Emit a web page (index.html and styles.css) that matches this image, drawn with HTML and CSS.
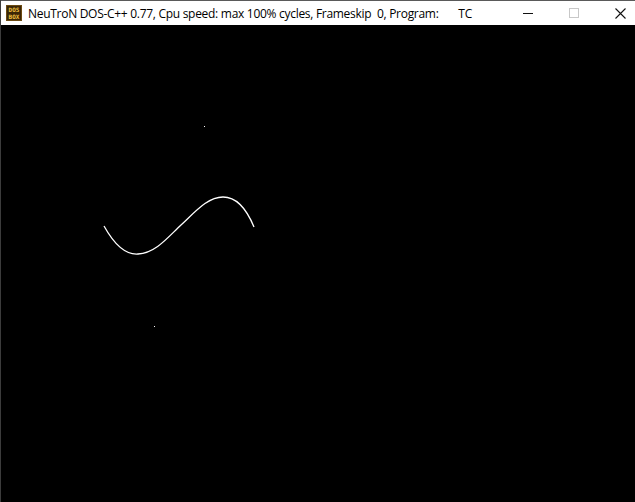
FILE: index.html
```html
<!DOCTYPE html>
<html>
<head>
<meta charset="utf-8">
<link rel="stylesheet" href="styles.css">
</head>
<body>
<div class="window">
  <header class="titlebar">
    <svg class="appicon" width="16" height="16" viewBox="0 0 16 16">
      <rect x="0" y="0" width="16" height="16" fill="#6b4a12"/>
      <rect x="1" y="1" width="14" height="14" fill="#3a2606"/>
      <text x="8" y="7" font-family="DejaVu Sans Mono, monospace" font-size="6" font-weight="bold" fill="#f0c040" text-anchor="middle">DOS</text>
      <text x="8" y="14" font-family="DejaVu Sans Mono, monospace" font-size="6" font-weight="bold" fill="#f0c040" text-anchor="middle">BOX</text>
    </svg>
    <span class="title">NeuTroN DOS-C++ 0.77, Cpu speed: max 100% cycles, Frameskip&nbsp; 0, Program:&nbsp;&nbsp;&nbsp;&nbsp;&nbsp;&nbsp;&nbsp;TC</span>
    <div class="controls">
      <span class="ctl min"><svg width="10" height="10" viewBox="0 0 10 10"><line x1="0" y1="5.5" x2="10" y2="5.5" stroke="#111" stroke-width="1"/></svg></span>
      <span class="ctl max"><svg width="10" height="10" viewBox="0 0 10 10"><rect x="0.5" y="0.5" width="9" height="9" fill="none" stroke="#c8c8c8" stroke-width="1"/></svg></span>
      <span class="ctl close"><svg width="11" height="11" viewBox="0 0 11 11"><path d="M0.5 0.5 L10.5 10.5 M10.5 0.5 L0.5 10.5" stroke="#111" stroke-width="1.1" fill="none"/></svg></span>
    </div>
  </header>
  <main class="screen">
    <svg class="canvas" viewBox="0 25 634 477" preserveAspectRatio="none">
      <path d="M103,226 C113,244 124,255 137,254 C155,253 168,236 180,225 C195,211 207,197 222,197 C236,197 246,210 253,227" fill="none" stroke="#fff" stroke-width="1.3"/>
      <rect x="203" y="126" width="1" height="1" fill="#fff"/>
      <rect x="153" y="326" width="1" height="1" fill="#fff"/>
    </svg>
  </main>
</div>
</body>
</html>
```

FILE: styles.css
```css
html, body {
  margin: 0;
  padding: 0;
  background: #000;
  overflow: hidden;
}
.window {
  width: 635px;
  height: 502px;
  display: flex;
  flex-direction: column;
  box-sizing: border-box;
  border-left: 1px solid #3c3c3c;
  overflow: hidden;
}
.titlebar {
  height: 25px;
  flex: 0 0 25px;
  background: #fff;
  display: flex;
  align-items: center;
  box-sizing: border-box;
  border-top: 1px solid #5a5a5a;
  padding-left: 5px;
}
.appicon {
  flex: 0 0 16px;
}
.title {
  margin-left: 6px;
  font-family: "Open Sans", "Noto Sans", sans-serif;
  font-size: 12px;
  color: #000;
  white-space: pre;
  letter-spacing: -0.29px;
}
.controls {
  margin-left: auto;
  margin-right: -8px;
  display: flex;
  align-items: center;
  height: 100%;
}
.ctl {
  width: 46px;
  height: 100%;
  display: flex;
  align-items: center;
  justify-content: center;
}
.ctl svg { display: block; }
.screen {
  flex: 1;
  background: #000;
}
.canvas {
  display: block;
  width: 100%;
  height: 100%;
}
```
